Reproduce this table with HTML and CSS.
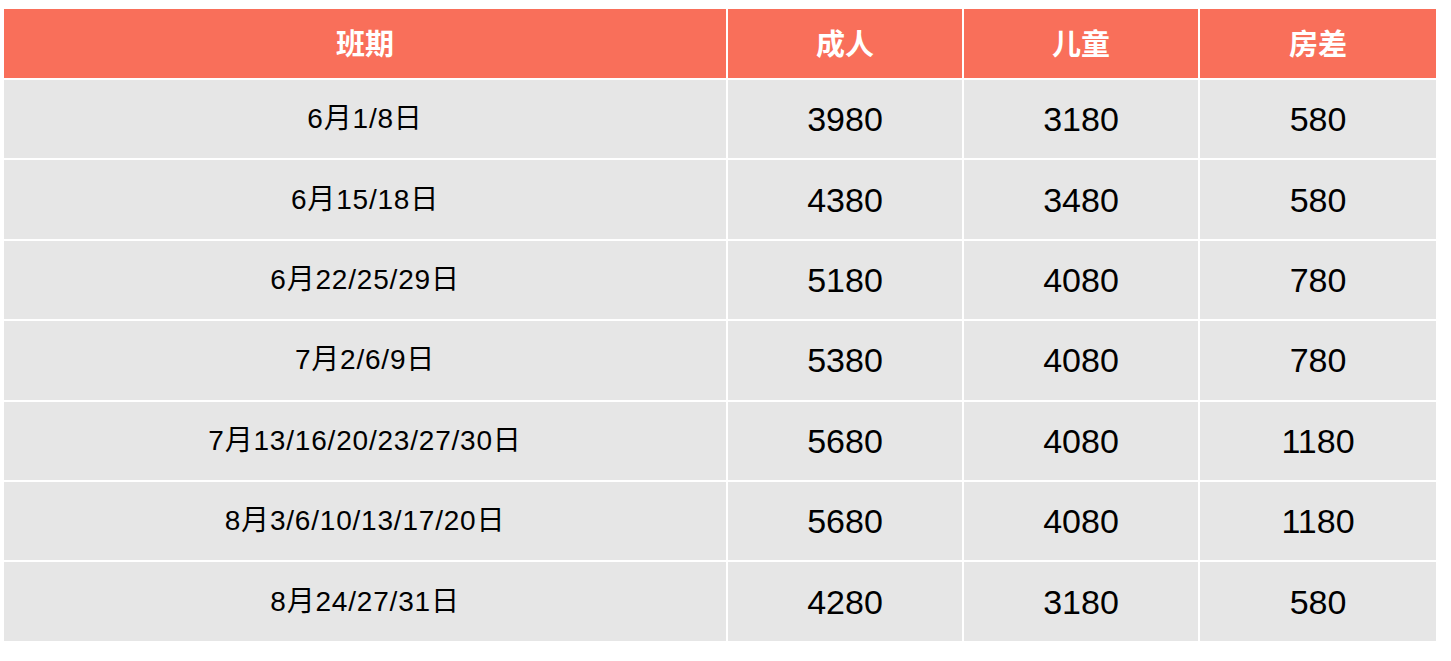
FILE: index.html
```html
<!DOCTYPE html>
<html lang="zh">
<head>
<meta charset="utf-8">
<title>班期价格表</title>
<link rel="stylesheet" href="styles.css">
</head>
<body>
<div class="table">
  <div class="cell head">班期</div>
  <div class="cell head">成人</div>
  <div class="cell head">儿童</div>
  <div class="cell head">房差</div>

  <div class="cell date">6月1/8日</div>
  <div class="cell num">3980</div>
  <div class="cell num">3180</div>
  <div class="cell num">580</div>

  <div class="cell date">6月15/18日</div>
  <div class="cell num">4380</div>
  <div class="cell num">3480</div>
  <div class="cell num">580</div>

  <div class="cell date">6月22/25/29日</div>
  <div class="cell num">5180</div>
  <div class="cell num">4080</div>
  <div class="cell num">780</div>

  <div class="cell date">7月2/6/9日</div>
  <div class="cell num">5380</div>
  <div class="cell num">4080</div>
  <div class="cell num">780</div>

  <div class="cell date">7月13/16/20/23/27/30日</div>
  <div class="cell num">5680</div>
  <div class="cell num">4080</div>
  <div class="cell num">1180</div>

  <div class="cell date">8月3/6/10/13/17/20日</div>
  <div class="cell num">5680</div>
  <div class="cell num">4080</div>
  <div class="cell num">1180</div>

  <div class="cell date">8月24/27/31日</div>
  <div class="cell num">4280</div>
  <div class="cell num">3180</div>
  <div class="cell num">580</div>
</div>
</body>
</html>
```

FILE: styles.css
```css
html, body {
  margin: 0;
  padding: 0;
  background: #ffffff;
}

body {
  padding: 9px 0 0 4px;
  font-family: "Liberation Sans", "Noto Sans CJK SC", sans-serif;
  color: #000000;
}

.table {
  display: grid;
  grid-template-columns: 722px 234px 234px 236px;
  grid-template-rows: 69px repeat(7, 78.4px);
  gap: 2px;
  width: 1432px;
}

.cell {
  display: flex;
  align-items: center;
  justify-content: center;
  background: #e6e6e6;
  white-space: nowrap;
  line-height: 1;
}

.head {
  background: #f96f5a;
  color: #ffffff;
  font-family: "Noto Sans CJK SC", sans-serif;
  font-weight: 700;
  font-size: 29px;
  padding-bottom: 3px;
}

.date {
  font-size: 28px;
  letter-spacing: 0.8px;
}

.num {
  font-size: 34px;
}
```
